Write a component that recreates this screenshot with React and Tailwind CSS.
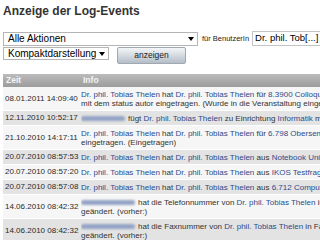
import React from "react";

const L = ({ children }) => <span className="text-[#2b4c8c]">{children}</span>;

const Blur = ({ w }) => (
  <span
    className="inline-block h-[5px] mr-[3px] rounded-full bg-[#95a3c4] blur-[1.2px] align-middle"
    style={{ width: w }}
  />
);

const DR = "Dr. phil. Tobias Thelen";

function Row({ time, shade, children }) {
  return (
    <div
      className={
        "grid grid-cols-[78px_1fr] items-center border-b border-white " +
        (shade ? "bg-[#e3e3e3]" : "bg-[#f6f6f6]")
      }
    >
      <div className="pl-[2px] whitespace-nowrap text-[#2a2a2a]">{time}</div>
      <div className="pt-[3px] pb-[2px] overflow-hidden">{children}</div>
    </div>
  );
}

const Line = ({ children }) => (
  <div className="whitespace-nowrap leading-[9px] h-[9px]">{children}</div>
);

const Arrow = () => (
  <span className="shrink-0 w-0 h-0 border-l-[3px] border-r-[3px] border-t-[4px] border-l-transparent border-r-transparent border-t-black" />
);

export default function App() {
  return (
    <div className="w-[320px] h-[240px] overflow-hidden bg-white text-[#333] font-['Liberation_Sans',Arial,sans-serif]">
      <h1 className="pl-[3px] pt-[4px] text-[12px] leading-[15px] font-bold text-[#333]">
        Anzeige der Log-Events
      </h1>

      <div className="mt-[12px] pl-[3px] flex items-center h-[15px] whitespace-nowrap">
        <div className="shrink-0 w-[195px] h-[14px] border border-[#b5b5b5] bg-white flex items-center justify-between pl-[4px] pr-[3px]">
          <span className="text-[10px] text-black">Alle Aktionen</span>
          <Arrow />
        </div>
        <span className="shrink-0 ml-[4px] text-[7.5px] text-[#222]">für BenutzerIn</span>
        <div className="shrink-0 ml-[3px] w-[80px] h-[15px] border border-[#c4c4c4] bg-white flex items-center pl-[2px]">
          <span className="text-[9.5px] text-black">Dr. phil. Tob[...]</span>
        </div>
      </div>

      <div className="mt-[1px] pl-[3px] flex items-start">
        <div className="shrink-0 w-[106px] h-[13px] border border-[#b5b5b5] bg-white flex items-center justify-between pl-[4px] pr-[3px]">
          <span className="text-[10px] text-black">Kompaktdarstellung</span>
          <Arrow />
        </div>
        <button className="ml-[8px] w-[69px] h-[17px] rounded-[2px] border border-[#a0a8b0] bg-gradient-to-b from-[#f4f6f8] to-[#b4bec8] text-[8.5px] text-[#222]">
          anzeigen
        </button>
      </div>

      <div className="mt-[10px] ml-[3px] text-[8px]">
        <div className="grid grid-cols-[78px_1fr] h-[13px] items-center bg-gradient-to-b from-[#bcbcbc] to-[#9c9c9c] text-[#f4f4f4] font-bold text-[8.5px]">
          <div className="pl-[3px]">Zeit</div>
          <div className="pl-[2px]">Info</div>
        </div>

        <Row time="08.01.2011 14:09:40">
          <Line>
            <L>{DR}</L> hat <L>{DR}</L> für <L>8.3900 Colloquium Informatik</L>
          </Line>
          <Line>mit dem status autor eingetragen. (Wurde in die Veranstaltung eingetragen.)</Line>
        </Row>
        <Row time="12.11.2010 10:52:17" shade>
          <Line>
            <Blur w={44} />
            fügt <L>{DR}</L> zu Einrichtung <L>Informatik</L> mit dem Status
          </Line>
        </Row>
        <Row time="21.10.2010 14:17:11">
          <Line>
            <L>{DR}</L> hat <L>{DR}</L> für <L>6.798 Oberseminar</L>
          </Line>
          <Line>eingetragen. (Eingetragen)</Line>
        </Row>
        <Row time="20.07.2010 08:57:53" shade>
          <Line>
            <L>{DR}</L> hat <L>{DR}</L> aus <L>Notebook University</L>
          </Line>
        </Row>
        <Row time="20.07.2010 08:57:20">
          <Line>
            <L>{DR}</L> hat <L>{DR}</L> aus <L>IKOS Testfragen</L>
          </Line>
        </Row>
        <Row time="20.07.2010 08:57:08" shade>
          <Line>
            <L>{DR}</L> hat <L>{DR}</L> aus <L>6.712 Computerlinguistik</L>
          </Line>
        </Row>
        <Row time="14.06.2010 08:42:32">
          <Line>
            <Blur w={54} />
            hat die Telefonnummer von <L>{DR}</L> in
          </Line>
          <Line>geändert. (vorher:)</Line>
        </Row>
        <Row time="14.06.2010 08:42:32" shade>
          <Line>
            <Blur w={54} />
            hat die Faxnummer von <L>{DR}</L> in Fax
          </Line>
          <Line>geändert. (vorher:)</Line>
        </Row>
      </div>
    </div>
  );
}
